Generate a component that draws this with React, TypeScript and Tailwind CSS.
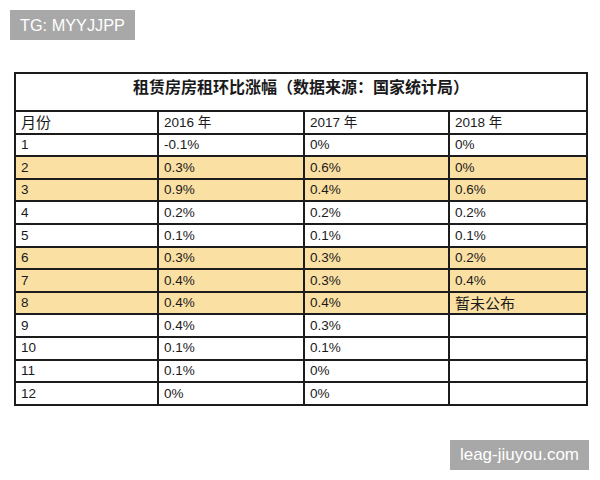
const rows: [string, string, string, string, boolean][] = [
  ["1", "-0.1%", "0%", "0%", false],
  ["2", "0.3%", "0.6%", "0%", true],
  ["3", "0.9%", "0.4%", "0.6%", true],
  ["4", "0.2%", "0.2%", "0.2%", false],
  ["5", "0.1%", "0.1%", "0.1%", false],
  ["6", "0.3%", "0.3%", "0.2%", true],
  ["7", "0.4%", "0.3%", "0.4%", true],
  ["8", "0.4%", "0.4%", "暂未公布", true],
  ["9", "0.4%", "0.3%", "", false],
  ["10", "0.1%", "0.1%", "", false],
  ["11", "0.1%", "0%", "", false],
  ["12", "0%", "0%", "", false],
];

const cell = "border-2 border-[#1c1c1c] px-[5px] py-0 h-[22.6px] leading-none text-left align-middle";

export default function App() {
  return (
    <div
      className="w-[600px] h-[480px] bg-white flex flex-col"
      style={{ fontFamily: '"Liberation Sans", "Noto Sans CJK SC", sans-serif' }}
    >
      {/* watermark top */}
      <div className="pt-[10px] pl-[10px]">
        <span className="inline-flex items-center h-[30px] px-[10px] bg-[#a8a8a8] text-white text-[16.3px]">
          TG: MYYJJPP
        </span>
      </div>

      <div className="pl-[14px] pt-[32px]">
        <table className="table-fixed border-collapse w-[572px] text-[13.5px] text-[#1a1a1a]">
          <colgroup>
            <col className="w-[143px]" />
            <col className="w-[146px]" />
            <col className="w-[145px]" />
            <col className="w-[138px]" />
          </colgroup>
          <thead>
            <tr>
              <th
                colSpan={4}
                className="border-2 border-[#1c1c1c] h-[38px] text-[16px] font-bold text-center align-top pt-[2px]"
              >
                租赁房房租环比涨幅（数据来源：国家统计局）
              </th>
            </tr>
            <tr>
              <td className={cell + " text-[15px]"}>月份</td>
              <td className={cell}>2016 年</td>
              <td className={cell}>2017 年</td>
              <td className={cell}>2018 年</td>
            </tr>
          </thead>
          <tbody>
            {rows.map(([m, a, b, c, hl]) => (
              <tr key={m} className={hl ? "bg-[#fbe0a3]" : "bg-white"}>
                <td className={cell}>{m}</td>
                <td className={cell}>{a}</td>
                <td className={cell}>{b}</td>
                <td className={cell + (c === "暂未公布" ? " text-[15px]" : "")}>{c}</td>
              </tr>
            ))}
          </tbody>
        </table>
      </div>

      {/* watermark bottom */}
      <div className="flex justify-end pr-[11px] mt-auto pb-[10px]">
        <span className="inline-flex items-center h-[30px] px-[10px] bg-[#a8a8a8] text-white text-[17px]">
          leag-jiuyou.com
        </span>
      </div>
    </div>
  );
}
